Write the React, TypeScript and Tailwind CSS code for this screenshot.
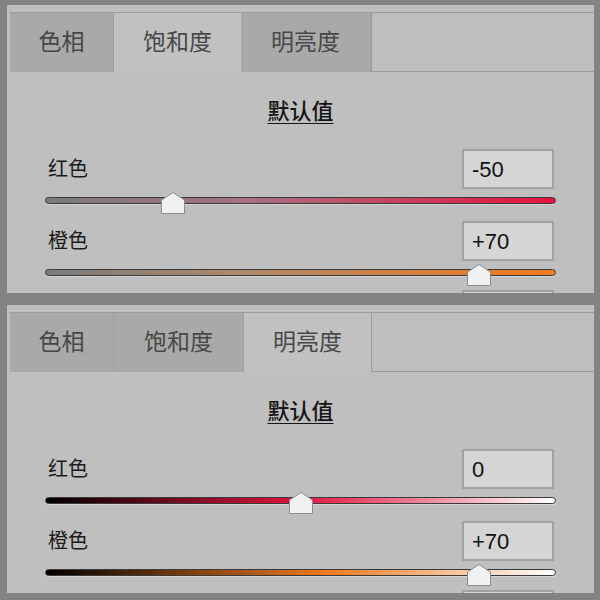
const font = "font-['Liberation_Sans','Noto_Sans_CJK_SC',sans-serif]";

type Row = { label: string; value: number; track: string };

type PanelProps = {
  active: number;
  widths: string[];
  rows: Row[];
};

const tabs = ["色相", "饱和度", "明亮度"];

const fmt = (v: number) => (v > 0 ? `+${v}` : `${v}`);

const Thumb = ({ value }: { value: number }) => (
  <svg
    width="24"
    height="22"
    viewBox="0 0 24 22"
    className="absolute top-[-5px] -ml-[12px]"
    style={{ left: `${(value + 100) / 2}%` }}
  >
    <polygon
      points="12,0.5 23.5,8 23.5,21.5 0.5,21.5 0.5,8"
      fill="#f1f1f1"
      stroke="#8c8c8c"
      strokeWidth="1"
    />
  </svg>
);

const Panel = ({ active, widths, rows }: PanelProps) => (
  <div className="h-[288px] shrink-0 overflow-hidden bg-[#bfbfbf] pl-[3px] pt-[7px]">
    {/* Tabs */}
    <div className="flex h-[60px] border-t border-[#9c9c9c]">
      {tabs.map((t, i) => (
        <div
          key={t}
          className={`${widths[i]} flex items-center justify-center text-[23px] text-[#474747] ${
            i === active
              ? "bg-[#c1c1c1]"
              : "bg-[#a9a9a9] border-r border-[#9f9f9f]"
          }`}
        >
          {t}
        </div>
      ))}
      <div className="flex-1 border-l border-b border-[#9c9c9c] bg-[#bebebe]" />
    </div>

    {/* Content */}
    <div className="-ml-[3px] px-[38px]">
      <div className="mt-[26px] flex justify-center">
        <span className="text-[22px] font-medium leading-[28px] text-[#151515] underline underline-offset-[4px] decoration-1">
          默认值
        </span>
      </div>

      <div className="mt-[23px]">
        {rows.map((r) => (
          <div key={r.label} className="h-[72px]">
            <div className="flex h-[40px] items-center justify-between">
              <span className="ml-[3px] text-[20px] text-[#1a1a1a]">
                {r.label}
              </span>
              <div className="mr-[2px] flex h-[40px] w-[92px] items-center border-2 border-[#a2a2a2] bg-[#d5d5d5] pl-[8px] text-[22px] text-[#111]">
                {fmt(r.value)}
              </div>
            </div>
            <div className="relative mt-[8px] h-[7px]">
              <div
                className={`h-[7px] rounded-full border border-[#3a3a3a] shadow-[0_1px_0_rgba(255,255,255,0.35)] ${r.track}`}
              />
              <Thumb value={r.value} />
            </div>
          </div>
        ))}
        {/* next row, cut off by the panel */}
        <div className="-mt-[3px] flex justify-end">
          <div className="mr-[2px] h-[40px] w-[92px] border-2 border-[#a2a2a2] bg-[#d5d5d5]" />
        </div>
      </div>
    </div>
  </div>
);

export default function App() {
  return (
    <div
      className={`${font} flex h-[600px] w-[600px] flex-col gap-[12px] overflow-hidden bg-[#838383] pl-[7px] pr-[6px] pt-[5px]`}
    >
      <Panel
        active={1}
        widths={["w-[104px]", "w-[127px]", "w-[130px]"]}
        rows={[
          {
            label: "红色",
            value: -50,
            track:
              "bg-[linear-gradient(to_right,#7a7a7a,#a87080_40%,#e8123f)]",
          },
          {
            label: "橙色",
            value: 70,
            track:
              "bg-[linear-gradient(to_right,#7a7a7a,#b08a6a_40%,#f47a1e)]",
          },
        ]}
      />
      <Panel
        active={2}
        widths={["w-[104px]", "w-[130px]", "w-[127px]"]}
        rows={[
          {
            label: "红色",
            value: 0,
            track:
              "bg-[linear-gradient(to_right,#000,#e4143e_50%,#fff)]",
          },
          {
            label: "橙色",
            value: 70,
            track:
              "bg-[linear-gradient(to_right,#000,#f07a1e_55%,#fff)]",
          },
        ]}
      />
    </div>
  );
}
